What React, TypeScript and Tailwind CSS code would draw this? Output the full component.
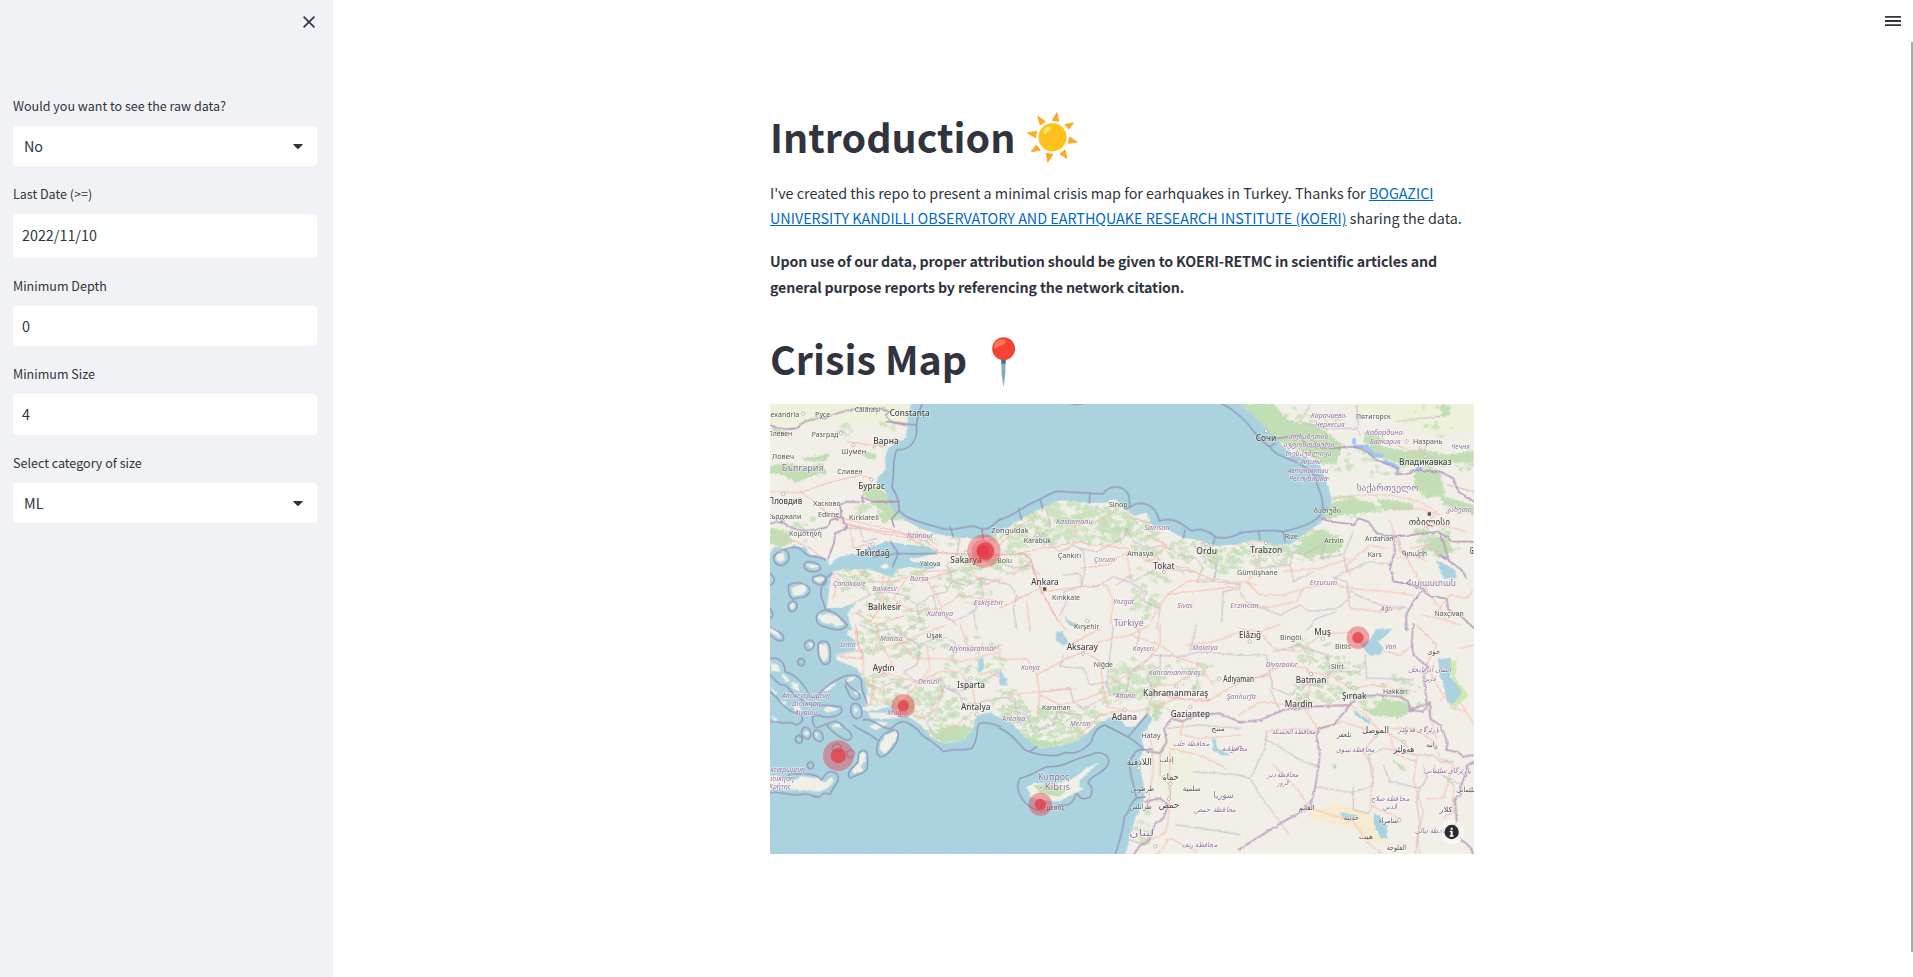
import React from "react";

const ORIGINS: Record<string, [number, number]> = {
  A: [0, 0],
  B: [720, 0],
  C: [1440, 0],
  D: [0, 690],
  E: [720, 690],
  F: [1440, 690],
};

function Tile({ id, children }: { id: string; children: React.ReactNode }) {
  const [x, y] = ORIGINS[id];
  return <g transform={`translate(${x} ${y})`}>{children}</g>;
}

const WATER: Record<string, string[]> = {
  A: [
    "M455 20 445 60 442 100 438 128 410 142 385 160 375 190 378 222 358 240 350 262 378 292 400 345 430 372 480 400 540 418 600 428 655 430 690 425 722 410V20Z",
    "M205 515 240 485 290 478 335 455 380 440 450 450 505 455 530 472 490 485 450 490 455 500 540 508 520 520 480 522 450 515 410 522 395 547 350 530 320 522 280 522 240 525 215 530Z",
    "M28 475 45 455 75 465 100 452 135 458 150 480 200 490 205 512 225 512 212 550 205 600 200 640 245 638 282 625 262 655 275 706H28Z",
  ],
  B: [
    "M-2 20H722V446L650 452 600 435 550 428 500 402 455 388 442 352 405 362 372 342 345 308 325 322 260 324 180 315 110 345 50 380-2 412Z",
    "M195 665 210 680 240 690 235 700 200 684Z",
  ],
  C: [
    "M-2 28 35 55 70 90 110 130 150 175 205 192 240 215 255 250 268 290 275 320 260 350 240 385 200 410 155 445 105 448 80 440 40 435-2 445Z",
    "M588 496 615 508 645 525 650 548 612 550 602 525Z",
  ],
  D: [
    "M28-2H272L262 30 285 45 285 75 225 90 230 105 290 130 312 165 320 190 318 215 315 250 350 240 400 238 400 262 325 262 330 280 390 282 440 272 482 300 512 335 550 357 612 345 640 310 650 272 690 262 722 280V690H28Z",
    "M655 105 668 95 672 130 655 145Z",
  ],
  E: [
    "M-2 278 40 300 80 342 120 370 190 362 240 345 290 300 330 277 365 288 378 306 410 300 442 263 457 282 440 312 422 330 432 370 418 400 422 440 434 500 425 545 405 580 388 640 375 690H-2Z",
    "M-2 135 20 165 22 182-2 178Z",
    "M168 22 185 20 205 50 190 62 170 45Z",
    "M636 345 645 340 652 370 690 388 665 392 640 372Z",
  ],
  F: [
    "M360 55 390 45 410 12 455 12 440 30 415 50 430 70 420 90 390 92 370 68Z",
    "M595 102 632 100 630 155 665 200 640 238 622 232 612 180 600 150Z",
    "M402 565 420 575 440 600 442 642 420 635 402 600Z",
    "M300 562 350 572 340 582 308 576Z",
    "M340 255 388 285 390 298 345 268Z",
    "M280 416 290 422 285 432 278 425Z",
  ],
};

const ISLANDS: Record<string, string[]> = {
  A: [
    "M50 478 70 472 75 490 60 502 48 492Z",
    "M135 508 160 505 180 515 160 522Z",
    "M155 550 185 545 198 555 175 562Z",
    "M95 580 115 572 135 565 140 585 125 600 98 602Z",
    "M90 630 100 622 104 636 94 644Z",
    "M172 665 195 655 230 660 250 690 230 695 215 685 190 685Z",
    "M360 512 380 508 390 517 370 522Z",
  ],
  D: [
    "M30 0 55 20 62 40 40 28 30 20Z",
    "M175 60 200 55 205 95 190 112 180 90Z",
    "M140 58 158 55 155 68Z",
    "M32 110 55 120 60 140 35 138Z",
    "M70 145 90 165 80 172 65 155Z",
    "M95 170 115 178 120 200 100 192Z",
    "M250 165 290 150 280 165 255 172Z",
    "M190 190 225 175 225 185 198 200Z",
    "M280 200 300 195 292 212Z",
    "M32 185 50 205 42 215Z",
    "M60 225 78 230 70 245Z",
    "M100 240 120 235 125 255 105 258Z",
    "M190 250 215 240 238 255 200 262Z",
    "M282 240 295 255 282 270Z",
    "M215 300 235 295 245 308 220 310Z",
    "M35 270 55 285 45 295Z",
    "M360 355 378 330 412 315 408 345 375 388 362 375Z",
    "M300 385 312 380 318 405 302 425 310 440 280 445 275 432 295 415Z",
    "M330 305 350 290 385 292 370 305 345 315Z",
    "M310 245 370 238 395 245 350 255 312 256Z",
    "M132 320 145 318 148 330 136 332Z",
    "M162 322 175 325 172 340Z",
    "M28 450 60 455 90 465 130 455 165 458 195 472 215 455 220 470 205 490 175 500 120 495 28 492Z",
  ],
  E: ["M80 485 105 472 160 478 225 458 255 432 300 410 280 430 240 465 238 485 250 492 215 510 175 530 130 526 92 518Z"],
};

const SEA_LINES: Record<string, string[]> = {
  A: [
    "M488 20C480 50 465 75 470 110C465 150 445 165 410 165C395 200 405 240 395 275C410 300 415 310 418 345C430 370 490 385 545 400C600 415 620 380 660 400C690 410 700 385 722 372",
    "M418 320 355 320M380 80 470 90M418 345 395 372 402 395M580 425 570 395M670 430 665 400",
    "M60 470C30 480 40 510 65 512C95 500 90 475 75 465M65 465C100 455 115 450 135 475C150 490 180 480 195 495M140 500C120 515 140 530 165 530C200 525 175 498 140 500M160 545C150 560 170 570 190 570C205 560 200 540 180 540ZM85 570C110 555 150 565 150 590C135 615 110 605 97 612C85 600 85 590 85 570M97 618C75 630 85 655 103 648C117 635 113 620 97 618M195 645C220 645 245 670 262 690C250 710 215 705 195 695C160 690 160 650 195 645M215 535C180 560 180 595 185 610C200 640 190 650 210 645M30 640C42 655 40 665 30 670M30 535C50 550 45 565 30 570",
    "M325 455 340 485 415 475 455 477 530 475M392 440 415 475 398 515",
  ],
  B: [
    "M200 20C230 35 250 25 270 20M655 20 690 40 722 65M-2 375C50 360 70 330 120 313C150 295 170 285 190 290L310 297C325 265 380 270 387 305L390 335C430 310 470 335 478 378C520 360 555 395 575 408C600 395 630 410 645 425C675 435 700 425 722 414",
    "M55 340 65 375M120 313 128 340M270 297 268 325M555 405 550 430M645 425 640 448M390 335 375 342",
  ],
  C: [
    "M-2 62C35 90 55 140 90 155C110 190 160 190 185 210C205 225 230 235 230 265C245 300 255 330 245 350C235 380 190 395 130 410C80 400 45 410-2 413",
    "M55 408 60 435M130 410 135 440M105 145 90 155M220 240 265 250M245 340 270 342",
  ],
  D: [
    "M30 5C60 25 75 25 70 45C50 55 40 35 30 30M150 45C175 50 160 80 140 75C125 60 140 45 150 45M175 55C205 35 215 60 210 110C190 135 170 100 175 55M124 100C140 105 135 120 124 122C108 118 112 103 124 100M30 100C60 95 75 115 75 140C115 150 140 190 150 215C170 230 190 180 230 165C260 145 300 145 305 170C300 200 320 215 320 235",
    "M30 150C50 165 50 180 70 180C90 180 95 215 120 220C145 250 175 235 240 245C260 265 220 285 180 272C150 265 155 290 165 305C180 315 195 290 200 300M30 200C55 215 60 240 95 260C130 270 140 285 110 300C90 285 70 300 50 290L30 290M255 165C270 200 300 190 300 220C270 235 265 200 255 180M275 240C285 225 310 240 305 275C285 290 265 270 275 240M200 300C230 275 245 300 255 310C290 330 270 350 260 345C240 340 215 320 200 300",
    "M130 308C150 300 160 330 145 342C125 340 118 325 130 308M165 315C185 310 200 345 180 350C160 345 155 330 165 315M115 330C130 335 130 350 118 355C100 350 105 335 115 330M230 355C250 360 245 375 235 380C210 380 215 360 230 355M270 375C290 375 285 395 270 398C255 390 260 378 270 375M355 350C370 320 415 300 415 330C415 360 375 400 360 395C345 385 350 370 355 350M300 380C325 365 325 395 322 425C325 440 300 445 270 460C255 440 280 430 290 415C300 405 290 390 300 380M151 410C165 415 163 430 151 431C138 428 140 413 151 410",
    "M30 502C60 498 80 510 120 510C150 500 150 515 170 515C190 520 180 495 210 508C225 475 245 465 230 445C200 430 195 450 185 465C165 440 130 450 105 445L85 450M280 300C300 320 330 320 350 345M310 285C340 275 370 320 395 310C430 270 450 300 475 315C480 335 520 345 550 380C580 370 605 378 635 370C660 340 645 300 660 295C690 290 705 300 722 305",
  ],
  E: [
    "M-2 310C30 320 50 350 75 375C110 390 170 400 195 382C230 390 250 375 275 350C280 320 295 305 315 300C350 320 405 340 432 375C405 370 405 385 397 395C385 410 390 430 392 445C400 480 405 500 410 520C380 540 395 560 372 575C375 600 360 640 345 690",
    "M60 460C90 455 115 435 140 425C190 430 220 400 270 390C310 370 340 400 320 425C300 450 265 455 265 475C285 490 275 520 260 520C235 525 240 510 230 505C215 535 210 545 180 540C130 570 95 560 65 520C50 490 50 475 60 460Z",
    "M432 375 455 372M410 520 435 515M90 380 110 365M385 335 440 270",
  ],
};

const BORDERS: Record<string, string[]> = {
  A: [
    "M30 90C55 105 90 105 115 98C125 75 180 65 195 70C230 50 280 45 300 38C340 38 370 38 385 50C370 70 390 85 440 90",
    "M30 385 65 380 95 398 125 408 180 402 205 395 212 375 245 365 240 330 255 320 310 322 305 305 335 320 380 320 418 320",
    "M245 365 260 400 225 415 222 445 205 490",
  ],
  C: [
    "M110 130 180 120 200 155 275 160 340 155 370 162 410 195 475 220 470 238 510 235 520 225 600 230 640 250 655 290 702 320",
    "M245 370 270 380 345 388 355 370 385 380 410 415 460 425 515 420 595 410 610 440 625 490 600 480 660 520 680 550",
    "M460 425 465 470 450 510 460 560 500 565 545 580 570 605 620 610 625 645 660 660 702 700M595 410 640 440 700 440",
    "M500 706 498 660 520 620 545 590",
  ],
  E: [
    "M440 378 480 385 500 350 492 310 515 280 545 290 590 270 660 265 722 292",
    "M435 530 480 520 505 540 490 580 465 595 445 650 420 660 400 690",
  ],
  F: [
    "M-2 292 60 285 130 255 210 245 330 240 350 215 420 210 480 215 505 230 510 255 560 235 555 180 550 140 565 125 520 90 515 50 520-2",
    "M330 240 280 300 235 312 230 340 240 390 225 490 210 545 130 590-2 672",
    "M510 255 550 260 570 230 570 280 600 300 620 345 620 375 650 380 672 395 702 390",
    "M702 410 680 420 680 440 660 490 665 510 645 520 650 590 640 610 660 640 690 665 702 690",
  ],
};

const PROVINCES: Record<string, string[]> = {
  A: [
    "M255 400 300 400 310 440 350 430M335 600 380 590 430 600 470 630 520 600 560 590 575 560 620 570 660 550 722 560M470 630 480 680 440 706M600 430 590 480 560 510 580 560M660 550 670 600 640 650 650 706M320 520 290 560 330 600 280 625M520 600 530 650 580 680 640 650",
  ],
  B: [
    "M-2 560 30 570 50 600 40 640 50 700M-2 500 40 520 90 510 120 540M140 345 150 390 120 430 180 470 225 450 250 470 255 520 245 575 290 575 340 545 385 560 440 590 430 620 480 640 470 700M240 460 290 470 370 430 380 400 400 440 450 460 490 450 540 480 590 490 610 520 590 560 640 560 650 500M385 545 400 560 470 520 590 530M190 540 240 535 245 575 190 590 200 620 180 660M610 420 600 480 650 510 645 550 690 560 722 570M722 580 670 590 665 680",
  ],
  C: [
    "M55 480 60 520 150 510 160 560 220 530M150 510 160 470 190 480 260 440 240 490 310 480 340 410M310 480 320 530 280 550 320 560 330 610 290 640 210 650 180 630 120 660 70 640 20 620-2 590M320 530 390 500 455 510M330 590 420 630 500 640M475 425 480 470 540 490 560 430M210 30 180 80 260 100 350 100 360 120M350 30 355 90M470 80 540 70 600 65M620 270 702 290M200 706 230 670 290 650",
  ],
  D: [
    "M300 0 340 20 400 10 440 40 480 60 540 30 580 50 620 80 722 60M320 180 360 190 400 170 430 190 470 170 540 160 560 190 600 200 722 140M480 60 470 120 430 140 470 170M540 165 550 210 510 250 530 270 500 290 520 330M560 190 600 210 610 240 720 220",
  ],
  E: [
    "M-2 220 40 215 50 260 80 270 100 320 160 300 170 260 240 270M80 270 60 300M130 200 210 190 220 230 250 250 330 210 320 170 270 180 250 130 180 125 190 90M340 0 330 90 320 180M330 210 380 200 390 140 460 90 540 95 600 80 722 90M480 90 480 140 440 150 460 200 520 220 580 200 590 170 590 110M570 80 590-2M430 660 380 640M480 385 480 450 510 480 510 530M580 440 722 450M530 600 610 610 722 630M400 0 420 20 410 60M500 310 600 300 722 310",
  ],
  F: [
    "M-2 90 80 90 90 150 40 160M90 150 100 190 150 210 180 180 250 180 270 140 260 90 180 60 100 80M90 190 120 260M375 90 380 160 430 160 520 165M270 140 360 140 375 110M80 315 75 370 30 460-2 450M30 460 60 510 145 625M75 340 190 410 235 425M225 485 340 503 400 480 385 390M340 485 340 555 385 565 400 540M385 390 430 370 530 390 580 390 600 410 640 410M430 420 450 470 540 490 560 460 550 420M540 485 530 530 540 600 525 690M580 420 590 440 660 480",
  ],
};

const ROADS: Record<string, string[]> = {
  A: [
    "M30 290 125 292 200 265 300 240 335 250M125 292 160 320 210 360 250 385 340 410 450 430 520 470 620 478 722 480M200 360 270 375 330 390 420 410 460 430M260 140 340 150 375 155M270 490 290 520 330 560 400 560 480 530 590 525M205 515 235 560 220 610M370 540 360 640 330 680M480 530 530 600 550 660 590 690M335 445 280 460 270 380M440 550 400 610 450 650 540 640 600 600 722 620M620 490 650 550 680 570 722 550M280 650 350 690 440 660M60 430 110 440 150 460 190 490",
  ],
  B: [
    "M-2 480 60 475 90 490 110 550 130 600 170 670 200 706M60 475 120 460 170 455 230 440 225 390 290 380 340 350 350 320M230 440 280 450 380 460 450 500 560 520 650 560 722 570M-2 450 50 400 110 360M120 580 60 610-2 640M130 590 200 580 320 570 340 620 330 690M380 365 440 380 510 400 610 440 722 450M450 500 500 450 440 420M450 680 500 600 570 590 670 580 722 575M500 600 560 560 630 550M40 540 90 500M380 470 390 540 350 570M80 620 90 706M240 520 320 510 380 470",
  ],
  C: [
    "M-2 438 60 440 140 445 210 405 250 365M40 450 50 520 20 560 60 600 130 600 190 580 280 565 330 580 440 590 520 600M280 310 370 300 450 300 540 320 590 350 550 400 600 390 680 410M450 375 470 440 500 490 540 560 570 600 600 640 620 680M330 540 320 510 390 450 440 460M320 580 330 640 420 650 480 640M-2 560 50 570M450 340 540 340 600 360M470 490 530 480 560 500M130 530 240 520 330 490M-2 630 70 640 170 620 190 580M470 150 540 180 560 150M590 650 630 600 680 610 702 580M510 460 560 450 600 480M540 660 600 670 660 690",
  ],
  D: [
    "M285 0 290 50 310 90 310 150 340 200 330 240M225 95 300 75 360 70 440 50 500 20 560 0M370 70 400 120 340 130 430 160 480 170 540 140 600 140 640 200 650 260M420 10 430 60 460 100 540 100 600 110 722 80M340 150 340 220 430 250 450 200 480 170M430 260 490 280 530 250 550 190M600 0 620 60 680 70 722 90M350 0 360 60M640 260 590 300 530 340M500 60 510 130 480 170M660 150 690 140 722 160",
  ],
  E: [
    "M-2 105 80 100 110 150 120 210 180 240 260 220 310 200M110 150 200 100 260 75 300 50 390 30 450 0M250 75 300 110 310 190 320 245 400 260 450 250 530 220 620 230 722 170M390 30 480 60 540 100 600 120 640 180M480-2 480 60 430 120 330 180M450 250 440 310 455 360 460 430 450 500 435 560M500 250 550 290 540 330 600 340 722 330M20 210 110 200 230 190M240 330 300 270 380 255M510 380 510 450 510 530 500 620 440 650M510 370 600 390 680 430M470 690 510 640 590 680M-2 290 50 320 90 360M210 60 300 10M120 210 110 300M450 180 520 180 590 140M560 60 640 50 722 20",
  ],
  F: [
    "M-2 10 60 20 120-2M60 20 100 70 180 80 240 30 340 20M-2 160 60 155 130 120 200 130 220 160 190 240M200 140 270 150 330 190 400 180 460 190 530 200M-2 270 60 230 190 245 330 240 380 270 410 310 490 350 530 400 520 470 550 560 530 640 540 690M190 240 230 310 310 290 400 320M410 330 370 380 400 430 390 540 480 580M450 310 520 310 580 350 600 400 640 420 610 520 560 520M450 340 470 390 530 410M80 320 170 310 240 320M100 420 170 490 210 550 340 590 380 650 430 690M530 0 590 60 560 120 590 180 640 250 680 260M660 70 702 60M560 240 590 340M630 180 600 230M400 70 480 90 520 60M640 480 640 560 610 580M660 230 702 300",
  ],
};

const FOREST_SHAPES: Record<string, string[]> = {
  A: [
    "M30 210 80 205 140 215 190 205 200 235 150 245 110 265 70 240 30 235Z",
    "M35 100 70 105 90 125 50 120Z",
    "M120 190 180 182 210 175 200 195 150 200Z",
    "M305 290 350 275 385 300 415 350 430 375 400 375 340 330Z",
    "M30 400 70 405 100 440 60 460 30 440Z",
    "M350 345 400 370 370 385Z",
    "M300 180 320 172 350 178 340 195Z",
  ],
  C: [
    "M-2 28H100L150 80 230 90 310 150 290 200 250 210 180 165 110 135 60 80Z",
    "M250 330 330 310 400 325 410 350 310 360 240 380 200 400 215 365Z",
    "M190 430 245 400 310 440 300 470 200 485 160 470 180 450Z",
    "M340 165 410 150 500 170 540 160 620 180 702 165 702 200 620 205 520 200 470 205 410 180Z",
    "M525 225 600 225 615 300 560 310 520 270Z",
    "M410 310 520 325 520 345 430 345Z",
    "M560 430 620 430 640 465 600 490 560 460Z",
    "M600 300 702 330 702 360 610 330Z",
    "M370 110 430 130 415 165 375 145Z",
    "M525 400 570 405 550 420 520 415Z",
    "M580 65 605 60 600 30 630 30 628 65Z",
  ],
  D: ["M512 330 550 310 610 300 635 308 610 345 550 355Z", "M420 225 460 225 465 260 425 270Z"],
  E: ["M80 340 120 345 160 350 200 345 180 360 120 370Z", "M100 480 150 478 200 495 180 515 120 505Z", "M460 235 485 240 475 290 460 285Z"],
  F: ["M360 245 400 255 430 220 510 235 520 255 480 278 400 272Z", "M455 400 500 435 490 437 460 412Z", "M605 445 640 475 635 480Z"],
};

type Patch = [string, number, number, number, number, number];
const PATCHES: Patch[] = [
  ["A", 340, 120, 110, 40, 10], ["A", 250, 100, 60, 20, 8], ["A", 470, 560, 200, 40, 40], ["A", 400, 650, 130, 50, 42], ["A", 640, 550, 80, 80, 48],
  ["A", 300, 560, 70, 50, 20], ["A", 330, 350, 40, 25, 9], ["A", 670, 500, 60, 30, 26], ["A", 130, 400, 90, 40, 14], ["A", 540, 430, 100, 20, 14],
  ["B", 180, 350, 130, 30, 80], ["B", 220, 410, 190, 45, 120], ["B", 50, 420, 80, 40, 50], ["B", 320, 370, 90, 45, 60], ["B", 410, 410, 80, 35, 34],
  ["B", 40, 500, 60, 35, 24], ["B", 540, 470, 150, 35, 60], ["B", 430, 620, 45, 50, 38], ["B", 680, 500, 60, 50, 36], ["B", 480, 540, 90, 30, 14],
  ["C", 60, 480, 100, 35, 44], ["C", 200, 450, 110, 45, 64], ["C", 300, 340, 120, 35, 34], ["C", 600, 445, 60, 50, 24], ["C", 180, 100, 130, 60, 30],
  ["C", 400, 210, 130, 40, 30], ["C", 570, 80, 100, 50, 8], ["C", 620, 200, 90, 35, 28],
  ["D", 370, 200, 80, 60, 50], ["D", 430, 50, 130, 50, 52], ["D", 500, 240, 100, 50, 52], ["D", 570, 300, 80, 40, 34], ["D", 640, 110, 90, 80, 36],
  ["D", 330, 50, 40, 60, 16], ["D", 380, 360, 25, 30, 8], ["D", 570, 190, 70, 40, 18],
  ["E", 60, 290, 90, 60, 56], ["E", 160, 335, 100, 35, 70], ["E", 240, 280, 70, 45, 40], ["E", 400, 160, 80, 60, 66], ["E", 20, 230, 50, 40, 20],
  ["E", 470, 220, 40, 50, 16], ["E", 570, 150, 80, 50, 20], ["E", 430, 600, 30, 60, 12], ["E", 350, 200, 50, 40, 28], ["E", 120, 280, 60, 30, 20],
  ["F", 250, 200, 110, 35, 50], ["F", 300, 130, 60, 45, 22], ["F", 440, 240, 100, 30, 36], ["F", 200, 80, 70, 40, 16], ["F", 480, 180, 60, 30, 14],
];

function seeded(seed: number) {
  let s = seed;
  return () => {
    s = (s * 16807) % 2147483647;
    return s / 2147483647;
  };
}

function patchPath([tile, cx, cy, rx, ry, n]: Patch, index: number) {
  const rnd = seeded(7919 * (index + 3));
  const [ox, oy] = ORIGINS[tile];
  let d = "";
  for (let i = 0; i < n; i++) {
    const a = rnd() * Math.PI * 2;
    const r = Math.sqrt(rnd());
    const x = ox + cx + Math.cos(a) * r * rx;
    const y = oy + cy + Math.sin(a) * r * ry;
    const w = 5 + rnd() * 13;
    const h = 3 + rnd() * 6;
    const t = (rnd() - 0.6) * 10;
    d += `M${(x - w).toFixed(0)} ${(y - t).toFixed(0)}L${(x - w * 0.3).toFixed(0)} ${(y - h).toFixed(0)} ${(x + w).toFixed(0)} ${(y + t).toFixed(0)} ${(x + w * 0.4).toFixed(0)} ${(y + h).toFixed(0)}Z`;
  }
  return d;
}

// tile, text, centre x, baseline y, width, kind (b: large city, c: city, p: province, n: country)
type Label = [string, string, number, number, number, "b" | "c" | "p" | "n"];
const LABELS: Label[] = [
  ["A", "Alexandria", 65, 66, 105, "c"], ["A", "Русе", 188, 66, 46, "c"], ["A", "Călărași", 322, 52, 76, "c"], ["A", "Constanța", 449, 62, 120, "b"],
  ["A", "Плевен", 60, 124, 74, "c"], ["A", "Разград", 195, 125, 80, "c"], ["A", "Варна", 378, 147, 76, "b"], ["A", "Шумен", 281, 176, 74, "c"],
  ["A", "Ловеч", 69, 193, 66, "c"], ["A", "България", 128, 229, 126, "n"], ["A", "Сливен", 270, 236, 76, "c"], ["A", "Бургас", 335, 281, 80, "b"],
  ["A", "Пловдив", 76, 327, 102, "b"], ["A", "Хасково", 201, 333, 82, "c"], ["A", "Кърджали", 72, 371, 104, "c"], ["A", "Edirne", 206, 367, 64, "c"],
  ["A", "Kırklareli", 312, 374, 90, "c"], ["A", "Κομοτηνή", 136, 422, 98, "c"], ["A", "İstanbul", 479, 430, 78, "p"], ["A", "Tekirdağ", 339, 483, 102, "b"],
  ["A", "Yalova", 510, 513, 62, "c"], ["A", "Sakarya", 618, 504, 94, "b"], ["A", "Bursa", 477, 557, 56, "p"], ["A", "Çanakkale", 268, 573, 98, "p"],
  ["A", "Balıkesir", 375, 588, 76, "p"], ["A", "Balıkesir", 374, 645, 100, "b"], ["A", "Kütahya", 540, 664, 78, "p"], ["A", "Eskişehir", 686, 629, 90, "p"],
  ["B", "Zonguldak", 30, 413, 112, "c"], ["B", "Sinop", 355, 337, 56, "c"], ["B", "Kastamonu", 223, 386, 110, "p"], ["B", "Samsun", 471, 405, 76, "p"],
  ["B", "Karabük", 112, 445, 82, "c"], ["B", "Bolu", 14, 504, 44, "c"], ["B", "Çankırı", 208, 489, 70, "c"], ["B", "Çorum", 314, 500, 64, "p"],
  ["B", "Amasya", 421, 482, 78, "c"], ["B", "Ordu", 620, 477, 62, "b"], ["B", "Tokat", 492, 521, 64, "b"], ["B", "Ankara", 135, 570, 82, "b"],
  ["B", "Kırıkkale", 198, 616, 84, "c"], ["B", "Yozgat", 371, 628, 62, "p"], ["B", "Sivas", 555, 638, 46, "p"], ["B", "Türkiye", 386, 692, 90, "n"],
  ["B", "Kırşehir", 260, 703, 76, "c"],
  ["C", "Карачаево-", 268, 69, 110, "p"], ["C", "Черкесия", 270, 95, 88, "p"], ["C", "Пятигорск", 400, 73, 104, "c"], ["C", "Сочи", 78, 137, 62, "b"],
  ["C", "აფხაზეთის", 205, 131, 120, "p"], ["C", "ავტონომიური", 206, 157, 152, "p"], ["C", "რესპუბლიკა", 205, 182, 138, "p"], ["C", "- Аԥсны", 208, 208, 70, "p"],
  ["C", "Автономтәи", 204, 233, 122, "p"], ["C", "Республика", 205, 258, 116, "p"], ["C", "Кабардино-", 436, 121, 116, "p"], ["C", "Балкария", 436, 147, 92, "p"],
  ["C", "Назрань", 563, 147, 88, "c"], ["C", "Чечня", 661, 161, 56, "p"], ["C", "Владикавказ", 556, 211, 158, "b"], ["C", "საქართველო", 443, 287, 186, "n"],
  ["C", "ბათუმი", 262, 354, 82, "c"], ["C", "კახეთი", 656, 351, 76, "p"], ["C", "თბილისი", 568, 389, 124, "b"], ["C", "Rize", 154, 433, 40, "c"],
  ["C", "Artvin", 282, 445, 58, "c"], ["C", "Ardahan", 418, 439, 86, "c"], ["C", "Trabzon", 79, 475, 96, "b"], ["C", "Kars", 404, 487, 42, "c"],
  ["C", "Գյումրի", 523, 483, 76, "c"], ["C", "Gümüşhane", 52, 539, 122, "c"], ["C", "Erzurum", 250, 570, 82, "p"], ["C", "Հայաստան", 573, 572, 150, "n"],
  ["C", "Erzincan", 14, 639, 86, "p"], ["C", "Ağrı", 440, 649, 36, "p"], ["C", "Naxçıvan", 627, 662, 88, "c"], ["C", "Gəncə", 712, 477, 46, "b"],
  ["D", "İzmir", 265, 66, 48, "p"], ["D", "Manisa", 394, 47, 68, "p"], ["D", "Uşak", 523, 39, 48, "c"], ["D", "Afyonkarahisar", 638, 77, 140, "p"],
  ["D", "Aydın", 371, 139, 66, "b"], ["D", "Denizli", 506, 177, 64, "p"], ["D", "Isparta", 633, 189, 84, "b"], ["D", "Antalya", 647, 255, 88, "b"],
  ["D", "Αποκεντρωμένη", 138, 219, 144, "p"], ["D", "Διοίκηση", 140, 244, 86, "p"], ["D", "Αιγαίου", 138, 269, 68, "p"], ["D", "Muğla", 412, 271, 60, "p"],
  ["D", "Αποκεντρωμένη", 66, 441, 138, "p"], ["D", "Διοίκηση", 60, 467, 84, "p"], ["D", "Κρήτης", 60, 493, 66, "p"],
  ["E", "Kayseri", 430, 77, 64, "p"], ["E", "Aksaray", 247, 75, 94, "b"], ["E", "Malatya", 615, 76, 76, "p"], ["E", "Konya", 91, 136, 56, "p"],
  ["E", "Niğde", 310, 127, 58, "c"], ["E", "Kahramanmaraş", 524, 151, 156, "p"], ["E", "Adıyaman", 716, 170, 92, "b"], ["E", "Adana", 376, 219, 58, "p"],
  ["E", "Kahramanmaraş", 527, 213, 196, "b"], ["E", "Karaman", 169, 254, 86, "c"], ["E", "Antalya", 41, 289, 68, "p"], ["E", "Mersin", 241, 304, 62, "p"],
  ["E", "Adana", 373, 285, 76, "b"], ["E", "Gaziantep", 571, 276, 118, "b"], ["E", "Şanlıurfa", 724, 222, 88, "p"], ["E", "Hatay", 453, 340, 58, "c"],
  ["E", "منبج", 654, 319, 40, "c"], ["E", "محافظة حلب", 573, 364, 110, "p"], ["E", "الرقة", 694, 378, 60, "p"], ["E", "اللاذقية", 418, 419, 76, "b"],
  ["E", "إدلب", 500, 411, 42, "c"], ["E", "حماة", 512, 466, 48, "b"], ["E", "طرطوس", 427, 497, 70, "c"], ["E", "سلمية", 575, 498, 54, "c"],
  ["E", "سوريا", 671, 519, 62, "n"], ["E", "طرابلس", 422, 551, 66, "c"], ["E", "حمص", 507, 549, 62, "b"], ["E", "محافظة حمص", 645, 561, 126, "p"],
  ["E", "Κύπρος", 161, 465, 94, "n"], ["E", "- Kıbrıs", 164, 496, 92, "n"], ["E", "Λεμεσός", 156, 555, 76, "c"], ["E", "لبنان", 425, 632, 74, "n"],
  ["E", "محافظة ريف", 598, 667, 106, "p"],
  ["F", "Elâzığ", 30, 38, 66, "b"], ["F", "Bingöl", 152, 46, 64, "c"], ["F", "Muş", 248, 30, 50, "b"], ["F", "Bitlis", 309, 72, 48, "c"], ["F", "Van", 452, 71, 34, "p"],
  ["F", "خوی", 581, 87, 38, "c"], ["F", "Diyarbakır", 125, 125, 96, "p"], ["F", "Siirt", 292, 131, 38, "c"], ["F", "استان آذربایجان", 568, 141, 130, "p"],
  ["F", "غربی", 568, 167, 38, "p"], ["F", "Batman", 213, 175, 92, "b"], ["F", "Hakkâri", 466, 208, 74, "c"], ["F", "Şırnak", 343, 223, 74, "b"],
  ["F", "Mardin", 176, 245, 84, "b"], ["F", "محافظة الحسكة", 161, 328, 132, "p"], ["F", "تلعفر", 312, 336, 44, "c"], ["F", "الموصل", 407, 323, 80, "b"],
  ["F", "پارێزگای هەولێر", 536, 321, 122, "p"], ["F", "ڕانیە", 576, 365, 34, "c"], ["F", "محافظة نينوى", 346, 382, 116, "p"], ["F", "هەولێر", 492, 382, 62, "b"],
  ["F", "پارێزگای سلێمانی", 622, 445, 138, "p"], ["F", "محافظة دير", 129, 455, 94, "p"], ["F", "الزور", 128, 481, 34, "p"], ["F", "سلێمانی", 682, 500, 66, "c"],
  ["F", "محافظة صلاح", 450, 527, 116, "p"], ["F", "الدين", 450, 553, 42, "p"], ["F", "القائم", 200, 554, 48, "c"], ["F", "كلار", 618, 560, 40, "c"],
  ["F", "حديثة", 334, 585, 46, "c"], ["F", "سامراء", 445, 593, 58, "c"], ["F", "محافظة ديالى", 580, 625, 110, "p"], ["F", "هيت", 378, 643, 42, "c"],
  ["F", "الفلوجة", 469, 674, 58, "c"], ["F", "محافظة", -8, 378, 60, "p"],
];

const TOWNS: [string, number, number][] = [
  ["A", 129, 56], ["A", 243, 115], ["A", 280, 150], ["A", 334, 254], ["A", 70, 297], ["A", 338, 448], ["A", 375, 617], ["A", 618, 472],
  ["B", 492, 531], ["B", 619, 447], ["B", 112, 420], ["B", 262, 678],
  ["C", 78, 108], ["C", 78, 444], ["C", 557, 184], ["C", 500, 139],
  ["D", 371, 150], ["D", 632, 160], ["D", 650, 268],
  ["E", 249, 86], ["E", 529, 184], ["E", 571, 246], ["E", 374, 254], ["E", 657, 161], ["E", 416, 429], ["E", 511, 477], ["E", 507, 522], ["E", 466, 664],
  ["F", 29, 49], ["F", 248, 41], ["F", 213, 147], ["F", 175, 214], ["F", 341, 189], ["F", 407, 332], ["F", 491, 351], ["F", 478, 586],
];

const LABEL_STYLE = {
  b: { size: 26, fill: "#444444", weight: 500, style: "normal" },
  c: { size: 22, fill: "#555555", weight: 400, style: "normal" },
  p: { size: 22, fill: "#94739f", weight: 400, style: "italic" },
  n: { size: 27, fill: "#8f729f", weight: 400, style: "normal" },
};

function Lines({ set, ...rest }: { set: Record<string, string[]> } & React.SVGProps<SVGGElement>) {
  return (
    <g fill="none" strokeLinejoin="round" strokeLinecap="round" {...rest}>
      {Object.keys(set).map((id) => (
        <Tile key={id} id={id}>
          {set[id].map((d, i) => (
            <path key={i} d={d} />
          ))}
        </Tile>
      ))}
    </g>
  );
}

function CrisisMap() {
  return (
    <svg viewBox="30 27 2112 1350" className="block h-[450px] w-[704px]" preserveAspectRatio="none">
      <defs>
        <filter id="coast" x="0" y="0" width="100%" height="100%">
          <feTurbulence type="fractalNoise" baseFrequency="0.07" numOctaves="3" seed="4" />
          <feDisplacementMap in="SourceGraphic" scale="9" xChannelSelector="R" yChannelSelector="G" />
        </filter>
        <filter id="rough" x="0" y="0" width="100%" height="100%">
          <feTurbulence type="fractalNoise" baseFrequency="0.12" numOctaves="3" seed="9" />
          <feDisplacementMap in="SourceGraphic" scale="16" xChannelSelector="R" yChannelSelector="G" />
        </filter>
      </defs>
      <rect x="30" y="27" width="2112" height="1350" fill="#f2efe9" />
      <g fill="#eef3d6" opacity="0.8">
        <path d="M30 27H450L440 100 250 80 120 90 30 85Z" />
        <path d="M1700 27H2142V110L2000 120 1850 60Z" />
        <path d="M1210 1010 1300 1080 1310 1180 1240 1220 1180 1150Z" opacity="0.7" />
      </g>
      <path d="M1640 1255 1730 1225 1790 1240 1840 1260 1850 1320 1900 1350 1820 1340 1780 1300 1650 1270Z" fill="#f7ecd0" />
      <path d="M2060 790 2090 800 2085 850 2125 900 2082 945 2078 850Z" fill="#cdebb0" filter="url(#rough)" />
      <g fill="#c2deb4" filter="url(#rough)">
        {Object.keys(FOREST_SHAPES).map((id) => (
          <Tile key={id} id={id}>
            {FOREST_SHAPES[id].map((d, i) => (
              <path key={i} d={d} />
            ))}
          </Tile>
        ))}
        {PATCHES.map((p, i) => (
          <path key={i} d={patchPath(p, i)} opacity="0.75" />
        ))}
      </g>
      <Lines set={PROVINCES} stroke="#c3b0c6" strokeWidth="3" opacity="0.85" filter="url(#coast)" />
      <Lines set={ROADS} stroke="#f8bcae" strokeWidth="3.2" opacity="0.9" filter="url(#coast)" />
      <g fill="none" stroke="#f09aa5" strokeWidth="3.4" opacity="0.6" filter="url(#coast)">
        <path d="M250 385 340 405 420 415 500 440 540 475 620 480 720 480 790 475 815 500 830 550 850 600 890 670" />
        <path d="M440 415 500 425 530 450M480 560 590 525M290 690 295 750 310 790 240 785" />
        <path d="M1170 920 1180 890 1260 910 1350 915" />
      </g>
      <g fill="#aad3df" stroke="#aad3df" strokeWidth="1" filter="url(#coast)">
        {Object.keys(WATER).map((id) => (
          <Tile key={id} id={id}>
            {WATER[id].map((d, i) => (
              <path key={i} d={d} />
            ))}
          </Tile>
        ))}
      </g>
      <g fill="#f0f0e6" filter="url(#coast)">
        {Object.keys(ISLANDS).map((id) => (
          <Tile key={id} id={id}>
            {ISLANDS[id].map((d, i) => (
              <path key={i} d={d} />
            ))}
          </Tile>
        ))}
      </g>
      <path d="M820 1170 870 1168 920 1185 900 1205 840 1195Z" fill="#c4dfb4" />
      <g fill="none" stroke="#9cc6f5" strokeWidth="12" strokeLinecap="round" strokeLinejoin="round">
        <path d="M1782 135v8M1785 155 1820 155 1840 180 1865 182M1875 200 1910 215M1972 222h12" />
      </g>
      <Lines set={SEA_LINES} stroke="#908cb3" strokeWidth="4.500" opacity="0.8" />
      <Lines set={BORDERS} stroke="#b598bb" strokeWidth="5.500" opacity="0.85" filter="url(#coast)" />
      <g fill="#fff" stroke="#999" strokeWidth="1.8">
        {TOWNS.map(([id, x, y], i) => (
          <circle key={i} cx={ORIGINS[id][0] + x} cy={ORIGINS[id][1] + y} r="5" />
        ))}
      </g>
      <path d="M849 577h10v10h-10zM2003 352h10v10h-10z" fill="#555" />
      <g textAnchor="middle" stroke="#ffffff" strokeOpacity="0.55" strokeWidth="4" strokeLinejoin="round" style={{ paintOrder: "stroke" }} className="font-['Noto_Sans','DejaVu_Sans',sans-serif]">
        {LABELS.map(([id, text, x, y, w, kind], i) => {
          const s = LABEL_STYLE[kind];
          return (
            <text key={i} x={ORIGINS[id][0] + x} y={ORIGINS[id][1] + y} textLength={w} lengthAdjust="spacingAndGlyphs" fontSize={s.size} fill={s.fill} fontWeight={s.weight} fontStyle={s.style}>
              {text}
            </text>
          );
        })}
      </g>
      <g fill="#e63946">
        <circle cx="672" cy="468" r="50" opacity="0.4" />
        <circle cx="669" cy="468" r="34" opacity="0.3" />
        <circle cx="676" cy="468" r="26" opacity="0.75" />
        <circle cx="668" cy="468" r="18" opacity="0.8" />
        <circle cx="430" cy="932" r="35" opacity="0.42" />
        <circle cx="430" cy="932" r="17" opacity="0.75" />
        <circle cx="235" cy="1082" r="46" opacity="0.42" />
        <circle cx="235" cy="1082" r="23" opacity="0.75" />
        <circle cx="841" cy="1228" r="35" opacity="0.42" />
        <circle cx="841" cy="1228" r="17" opacity="0.75" />
        <circle cx="1794" cy="728" r="34" opacity="0.42" />
        <circle cx="1794" cy="728" r="17" opacity="0.75" />
      </g>
      <circle cx="2075" cy="1311" r="36" fill="#fff" opacity="0.5" />
      <circle cx="2075" cy="1311" r="21.5" fill="#2b2b2b" />
      <path d="M2072 1298h6v6h-6zM2069 1307h9v14h3v4h-12v-4h3v-10h-3z" fill="#fff" />
    </svg>
  );
}

function SunIcon() {
  return (
    <svg viewBox="0 0 150 150" className="h-[51px] w-[51px]">
      <g fill="#ffa726" stroke="#ffa726" strokeWidth="3" strokeLinejoin="round">
        <path d="M88 2 93 27 75 24Z" />
        <path d="M136 32 123 50 112 37Z" />
        <path d="M147 88 122 92 125 74Z" />
        <path d="M117 136 97 123 112 112Z" />
        <path d="M61 147 57 121 76 125Z" />
        <path d="M13 117 27 98 39 112Z" />
        <path d="M2 61 28 57 25 75Z" />
        <path d="M32 13 53 27 39 38Z" />
      </g>
      <circle cx="75" cy="74.500" r="41.500" fill="#fcc21b" />
      <path d="M50 63C45 53 56 40 66 43C76 46 66 54 61 59C57 64 53 69 50 63Z" fill="#fde068" />
    </svg>
  );
}

function PinIcon() {
  return (
    <svg viewBox="0 0 70 147" className="mt-[3px] h-[49px] w-[23.300px]">
      <path d="M28 68H41L40 110 35.500 146 34 146 28.500 110Z" fill="#82aec0" />
      <path d="M28 66H41V80H28Z" fill="#2f7889" />
      <circle cx="35" cy="35" r="34.500" fill="#f44336" />
      <path d="M7 32C3 15 22 4 36 8C48 12 38 22 28 25C19 28 10 42 7 32Z" fill="#ff7555" />
    </svg>
  );
}

function Field({ label, value, select, height }: { label: string; value: string; select?: boolean; height: string }) {
  return (
    <div>
      <div className="mb-2 flex h-6 items-center text-[12.540px]">{label}</div>
      <div className={`flex items-center justify-between rounded bg-white text-[14.340px] ${height} ${select ? "pl-[11px] pr-[14px]" : "pl-[9px]"}`}>
        <span>{value}</span>
        {select && (
          <svg viewBox="0 0 10 5" className="h-[5px] w-[10px]" fill="#31333f">
            <path d="M.6 0H9.400Q10 .5 9.400 1L5.600 4.700Q5 5.100 4.400 4.700L.6 1Q0 .5.6 0Z" />
          </svg>
        )}
      </div>
    </div>
  );
}

export default function App() {
  return (
    <div className="relative flex h-[977px] w-full overflow-hidden bg-white font-['Source_Sans_Pro','Noto_Sans_CJK_SC',sans-serif] text-[#31333f]">
      <aside className="flex w-[333px] shrink-0 flex-col bg-[#f0f2f6]">
        <div className="flex h-[94px] justify-end pr-[18px] pt-4">
          <svg viewBox="0 0 12 12" className="h-3 w-3" fill="none" stroke="#31333f" strokeWidth="1.600">
            <path d="M.6.6 11.400 11.400M11.400.6.6 11.400" />
          </svg>
        </div>
        <div className="flex w-[317px] flex-col gap-4 pl-[13px]">
          <Field label="Would you want to see the raw data?" value="No" select height="h-10" />
          <Field label="Last Date (>=)" value="2022/11/10" height="h-11 pb-[2px]" />
          <Field label="Minimum Depth" value="0" height="h-10" />
          <Field label="Minimum Size" value="4" height="h-[41px] pb-px" />
          <Field label="Select category of size" value="ML" select height="h-10" />
        </div>
      </aside>
      <main className="flex grow flex-col">
        <header className="flex h-[42px] justify-end pr-3 pt-4">
          <svg viewBox="0 0 16 10" className="h-[10px] w-4" fill="#31333f">
            <path d="M0 0h16v1.800H0zM0 4.100h16v1.800H0zM0 8.200h16V10H0z" />
          </svg>
        </header>
        <div className="ml-[437px] flex w-[704px] flex-col pt-[69px]">
          <h1 className="flex h-[53px] items-center gap-3 text-[39.400px] font-bold">
            <span className="-mt-[3px]">Introduction</span>
            <SunIcon />
          </h1>
          <p className="mt-4 text-[14.340px] leading-[25px]">
            I've created this repo to present a minimal crisis map for earhquakes in Turkey. Thanks for{" "}
            <a className="text-[#0068c9] underline">
              BOGAZICI
              <br />
              UNIVERSITY KANDILLI OBSERVATORY AND EARTHQUAKE RESEARCH INSTITUTE (KOERI)
            </a>{" "}
            sharing the data.
          </p>
          <p className="mt-[18px] text-[14.200px] font-semibold leading-[26px] tracking-[-0.125px]">
            Upon use of our data, proper attribution should be given to KOERI-RETMC in scientific articles and
            <br />
            general purpose reports by referencing the network citation.
          </p>
          <h1 className="mb-[18px] mt-[33px] flex h-[53px] items-center gap-[25px] text-[39.400px] font-bold">
            <span className="-mt-[3px]">Crisis Map</span>
            <PinIcon />
          </h1>
          <CrisisMap />
        </div>
      </main>
      <div className="absolute right-0 top-[42px] h-[910px] w-[2px] bg-[#a9aab0]" />
    </div>
  );
}
